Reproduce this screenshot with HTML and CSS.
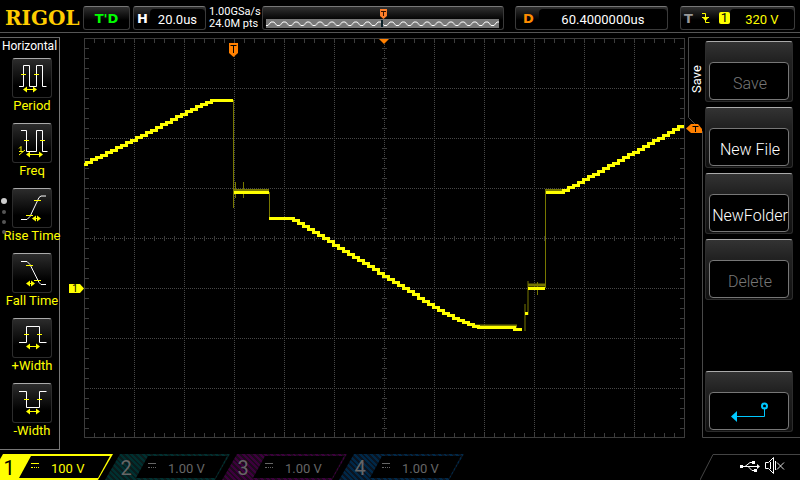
FILE: index.html
```html
<!DOCTYPE html>
<html lang="en">
<head>
  <meta charset="UTF-8">
  <meta name="viewport" content="width=device-width, initial-scale=1.0">
  <title>RIGOL</title>
  <link rel="stylesheet" href="styles.css">
</head>
<body>

  <!-- Status bar -->
  <header class="topbar">
    <div class="logo">RIGOL</div>
    <button class="box run-state">T'D</button>
    <button class="box timebase"><b>H</b><span class="value">20.0us</span></button>
    <div class="sampling"><div>1.00GSa/s</div><div>24.0M pts</div></div>
    <div class="box memory">
      <svg viewBox="0 0 242 23" preserveAspectRatio="none">
        <defs>
          <pattern id="sine" x="3" y="0" width="12" height="23" patternUnits="userSpaceOnUse">
            <path d="M0 18.500h2l3 -3.500h3l3 3.500h1" fill="none" stroke="#fff"/>
          </pattern>
        </defs>
        <rect x="3" y="12" width="235" height="9" fill="#777"/>
        <rect x="3" y="12" width="235" height="9" fill="url(#sine)"/>
        <path d="M119 13h2v7h-2z" fill="#0a2028"/>
        <path d="M118 2h7v7l-3.500 3l-3.500 -3z" fill="#ff7f2a"/>
        <path d="M119 4.500h5M121.500 4v5" stroke="#301000" fill="none"/>
      </svg>
    </div>
    <button class="box delay"><b>D</b><span class="value">60.4000000us</span></button>
    <button class="box trigger">
      <b>T</b>
      <svg class="edge" width="10" height="12" viewBox="0 0 10 12">
        <path d="M1 1.500h3.500v9h4M1 5.500h7" fill="none" stroke="#ff0"/>
        <path d="M1 5h7l-3.500 4z" fill="#ff0"/>
      </svg>
      <span class="source">1</span>
      <span class="value">320 V</span>
    </button>
  </header>

  <main class="main">
    <!-- Measure menu -->
    <nav class="measure-panel">
      <h2 class="measure-title">Horizontal</h2>
      <button class="measure">
        <svg class="icon" viewBox="0 0 38 38">
          <path class="wave" d="M6 27.500h4.500v-21h6v21h7v-21h6v21h4"/>
          <path class="mark" d="M8 15.500h5M21 15.500h5M13 30.500h9"/>
          <path class="arrow" d="M10 30.500l4 -3v6zM24 30.500l-4 -3v6z"/>
        </svg>
        <span>Period</span>
      </button>
      <button class="measure">
        <svg class="icon" viewBox="0 0 38 38">
          <path class="wave" d="M8 6.500h5.500v21h10v-21h6v21h5"/>
          <path class="mark" d="M11 16.500h5M27 16.500h5M15 30.500h14M6 24.500l2 -2v5M6 27.500h4M6 31l6 -5"/>
          <path class="arrow" d="M13 30.500l4 -3v6zM30 30.500l-4 -3v6z"/>
        </svg>
        <span>Freq</span>
      </button>
      <button class="measure">
        <svg class="icon" viewBox="0 0 38 38">
          <path class="wave" d="M8 30.500h6l3 -3l9 -19l2 -1.500h5"/>
          <path class="mark" d="M21 11.500h7M13 26.500h7M21 29.500h5"/>
          <path class="arrow" d="M19 29.500l4 -3v6zM28 29.500l-4 -3v6z"/>
        </svg>
        <span>Rise Time</span>
      </button>
      <button class="measure">
        <svg class="icon" viewBox="0 0 38 38">
          <path class="wave" d="M8 7.500h6l3 3l9 18l2 2h5"/>
          <path class="mark" d="M13 11.500h7M21 26.500h7M15 29.500h5"/>
          <path class="arrow" d="M13 29.500l4 -3v6zM22 29.500l-4 -3v6z"/>
        </svg>
        <span>Fall Time</span>
      </button>
      <button class="measure">
        <svg class="icon" viewBox="0 0 38 38">
          <path class="wave" d="M6 23.500h7.500v-16h13v16h7"/>
          <path class="mark" d="M11 15.500h5M24 15.500h5M15 27.500h10"/>
          <path class="arrow" d="M13 27.500l4 -3v6zM27 27.500l-4 -3v6z"/>
        </svg>
        <span>+Width</span>
      </button>
      <button class="measure">
        <svg class="icon" viewBox="0 0 38 38">
          <path class="wave" d="M6 7.500h7.500v16h13v-16h7"/>
          <path class="mark" d="M11 15.500h5M24 15.500h5M15 27.500h10"/>
          <path class="arrow" d="M13 27.500l4 -3v6zM27 27.500l-4 -3v6z"/>
        </svg>
        <span>-Width</span>
      </button>
      <div class="pager"><i class="active"></i><i></i><i></i><i></i></div>
    </nav>

    <!-- Waveform -->
    <svg class="plot" viewBox="60 33 628 421">
      <g class="grid">
        <path d="M134.500 38v400M184.500 38v400M234.500 38v400M284.500 38v400M334.500 38v400M384.500 38v400M434.500 38v400M484.500 38v400M534.500 38v400M584.500 38v400M634.500 38v400"/>
        <path d="M84 88.500h600M84 138.500h600M84 188.500h600M84 238.500h600M84 288.500h600M84 338.500h600M84 388.500h600"/>
      </g>
      <rect class="frame" x="84.500" y="38.500" width="600" height="399"/>
      <g class="ticks">
        <path d="M84 40.500h600M84 435.500h600M84 238.500h600"/>
        <path d="M86.500 38v400M682.500 38v400M384.500 38v400"/>
      </g>

      <path class="edge-line" d="M233.500 100v108M235.500 182v16M243.500 182v16M269.500 192v26M525 304v27M528 281v34M537.500 282v13M545.500 288v-99"/>
      <path class="glow" d="M234 190.500h35M475 326h42M528 285h17M546 190.500h16"/>
      <path class="trace" d="M84 164h2v-2h5v-3h5v-2h5v-2h5v-3h5v-2h5v-3h5v-2h5v-3h5v-2h5v-3h5v-2h5v-3h5v-2h5v-3h5v-3h5v-2h5v-3h5v-3h5v-2h5v-3h5v-2h5v-3h5v-2h5v-2h5v-2h22"/>
      <path class="trace" d="M234 192.500h35M269 218h24v2h5v3h5v3h5v3h5v3h5v3h5v3h5v3h5v4h5v3h5v3h5v3h5v3h5v3h5v3h5v3h5v3h5v4h5v3h5v3h5v3h5v3h5v3h5v3h5v3h5v4h5v3h5v3h5v3h5v3h5v3h5v2h5v3h5v2h5v2h5v2h5v2h5v1h36v2h8M525 313h3M528 288h17M546 192.500h17v-2h5v-3h5v-2h5v-3h5v-3h5v-3h5v-2h5v-3h5v-3h5v-3h5v-2h5v-3h5v-3h5v-3h5v-2h5v-3h5v-3h5v-3h5v-3h5v-2h5v-3h5v-3h5v-3h5v-3h6"/>

      <path class="orange" d="M229 43h9v10l-4.500 4l-4.500 -4z"/>
      <path class="marker-t" d="M230.500 45.500h6M233.500 45v8"/>
      <path class="orange" d="M379 39h10l-5 5z"/>
      <path class="yellow" d="M69 284h11l4 4.500l-4 4.500h-11z"/>
      <text class="marker-1" x="75" y="292">1</text>
      <path class="orange" d="M686 128.500l5 -4.500h7l4 5v4h-11z"/>
      <path class="marker-t" d="M692.500 126.500h6M695.500 126v6"/>
    </svg>

    <!-- Storage menu -->
    <aside class="menu">
      <svg class="menu-outline" viewBox="0 0 112 421" preserveAspectRatio="none">
        <path d="M112 4.500h-111.500v80l14 14v306h97.500"/>
      </svg>
      <h2 class="menu-title">Save</h2>
      <div class="menu-list">
        <button class="softkey" disabled><span>Save</span></button>
        <button class="softkey"><span>New File</span></button>
        <button class="softkey"><span>NewFolder</span></button>
        <button class="softkey" disabled><span>Delete</span></button>
        <button class="softkey back" aria-label="Back">
          <span>
            <svg width="40" height="22" viewBox="0 0 40 22">
              <path d="M5 14.500h29.500v-9" fill="none" stroke="#00c8ff"/>
              <circle cx="34.500" cy="4" r="2.500" fill="none" stroke="#00c8ff" stroke-width="2"/>
              <path d="M1 14.500l6 -5.500v11z" fill="#00c8ff"/>
            </svg>
          </span>
        </button>
      </div>
    </aside>
  </main>

  <!-- Channels -->
  <footer class="channels">
    <button class="channel ch1">
      <span class="number">1</span>
      <span class="scale"><i class="dc"></i><span>100 V</span></span>
    </button>
    <button class="channel ch2">
      <span class="number">2</span>
      <span class="scale"><i class="dc"></i><span>1.00 V</span></span>
    </button>
    <button class="channel ch3">
      <span class="number">3</span>
      <span class="scale"><i class="dc"></i><span>1.00 V</span></span>
    </button>
    <button class="channel ch4">
      <span class="number">4</span>
      <span class="scale"><i class="dc"></i><span>1.00 V</span></span>
    </button>
    <svg class="tray" width="100" height="26" viewBox="0 0 100 26">
      <path d="M0 26l13 -25.500h87" fill="none" stroke="#444"/>
      <!-- usb -->
      <g fill="none" stroke="#fff">
        <path d="M42 12.500h16M45 12.500l5 -4h3M48 12.500l4 4h4"/>
      </g>
      <path d="M40 11h3v3h-3zM57 10l3 2.500l-3 2.500zM52 7h3v3h-3zM54 15h3v3h-3z" fill="#fff"/>
      <!-- speaker off -->
      <path d="M65.500 8.500h3l5 -5v16l-5 -5h-3zM70.500 8v7M75.500 7v9" fill="none" stroke="#fff"/>
      <path d="M77 8.500l7 7M84 8.500l-7 7" fill="none" stroke="#ddd"/>
    </svg>
  </footer>

</body>
</html>
```

FILE: styles.css
```css
* {
  margin: 0;
  padding: 0;
  box-sizing: border-box;
}

body {
  min-height: 100vh;
  display: flex;
  flex-direction: column;
  background-color: #000;
  color: #fff;
  font-family: Roboto, "Liberation Sans", sans-serif;
  font-size: 13px;
  overflow: hidden;
}

button {
  font: inherit;
  color: inherit;
  background: none;
  border: none;
  cursor: pointer;
}

svg {
  display: block;
}

/* Status bar */
.topbar {
  display: flex;
  align-items: center;
  height: 33px;
  padding: 4px 5px 0 0;
  border-bottom: 1px solid #555;
}

.logo {
  width: 83px;
  padding-left: 5px;
  font-family: "DejaVu Serif", serif;
  font-size: 20px;
  font-weight: bold;
  color: #fc0;
}

.box {
  display: flex;
  align-items: center;
  height: 24px;
  border: 1px solid #3a3a3a;
  border-top: 1px solid #777;
  border-radius: 3px;
  background: linear-gradient(#303030, #000 60%);
}

.box b {
  font-family: "DejaVu Sans", sans-serif;
  font-size: 13px;
  font-weight: bold;
}

.box .value {
  flex: 1;
  height: 19px;
  line-height: 21px;
  border-radius: 4px;
  background-color: #000;
  text-align: center;
}

.run-state {
  width: 47px;
  justify-content: center;
  font-family: "DejaVu Sans", sans-serif;
  font-weight: bold;
  color: #0f0;
}

.timebase {
  width: 73px;
  margin: 0 3px;
  padding: 0 0 0 3px;
  gap: 2px;
}

.sampling {
  width: 53px;
  font-size: 11px;
  line-height: 12px;
  white-space: nowrap;
}

.memory {
  flex: 1;
}

.memory svg {
  width: 100%;
  height: 23px;
}

.delay {
  width: 153px;
  margin: 0 12px 0 11px;
  padding-left: 7px;
  gap: 5px;
}

.delay b {
  color: #ff8c00;
}

.trigger {
  width: 115px;
  padding-left: 3px;
  color: #ff0;
}

.trigger b {
  color: #999;
}

.edge {
  margin: 0 8px;
}

.source {
  width: 11px;
  height: 12px;
  line-height: 12px;
  border-radius: 2px;
  background-color: #ff0;
  color: #000;
}

/* Main area */
.main {
  flex: 1;
  display: flex;
}

.measure-panel {
  position: relative;
  width: 60px;
  margin: 4px 0;
  border-top: 1px solid #666;
  border-right: 1px solid #777;
  border-bottom: 1px solid #777;
  display: flex;
  flex-direction: column;
  align-items: center;
  gap: 10px;
}

.measure-title {
  height: 10px;
  line-height: 16px;
  font-size: 12px;
  font-weight: normal;
}

.measure {
  display: flex;
  flex-direction: column;
  align-items: center;
  width: 100%;
  color: #ff0;
  line-height: 15px;
  white-space: nowrap;
  padding-left: 5px;
}

.icon {
  width: 40px;
  height: 40px;
  border-radius: 3px;
  border: 1px solid #2c2c2c;
  border-top-color: #aaa;
  background: linear-gradient(#2c2c2c, #000 70%);
}

.wave {
  fill: none;
  stroke: #fff;
}

.mark {
  fill: none;
  stroke: #ff0;
}

.arrow {
  fill: #ff0;
}

.pager {
  position: absolute;
  left: 0;
  top: 160px;
  display: flex;
  flex-direction: column;
  align-items: center;
  width: 8px;
  gap: 6px;
}

.pager i {
  width: 4px;
  height: 4px;
  border-radius: 50%;
  background-color: #555;
}

.pager .active {
  width: 6px;
  height: 6px;
  background-color: #ccc;
}

.plot {
  position: relative;
  z-index: 1;
  flex: 1;
  min-width: 0;
  overflow: visible;
}

.grid path {
  stroke: #484848;
  stroke-dasharray: 1 1;
  shape-rendering: crispEdges;
}

.frame {
  fill: none;
  stroke: #3c3c3c;
}

.ticks path {
  fill: none;
  stroke: #3c3c3c;
  stroke-width: 5;
  stroke-dasharray: 1 9;
}

.trace {
  fill: none;
  stroke: #ff0;
  stroke-width: 3;
  shape-rendering: crispEdges;
}

.glow {
  stroke: #777700;
  stroke-width: 3;
}

.edge-line {
  stroke: #777700;
}

.orange {
  fill: #ff8000;
}

.yellow {
  fill: #ff0;
}

.marker-t {
  fill: none;
  stroke: #000;
}

.marker-1 {
  font-size: 10px;
  text-anchor: middle;
}

/* Storage menu */
.menu {
  position: relative;
  display: flex;
  width: 112px;
}

.menu-outline {
  position: absolute;
  width: 100%;
  height: 100%;
}

.menu-outline path {
  fill: none;
  stroke: #484848;
}

.menu-title {
  width: 17px;
  height: 92px;
  line-height: 17px;
  writing-mode: vertical-rl;
  transform: rotate(180deg);
  text-align: center;
  font-size: 13px;
  font-weight: normal;
}

.menu-list {
  position: relative;
  display: flex;
  flex-direction: column;
  gap: 5px;
  padding: 8px 0 22px;
}

.softkey {
  width: 88px;
  height: 61px;
  padding: 20px 3px 2px;
  border: 1px solid #2c2c2c;
  border-top-color: #aaa;
  border-radius: 3px;
  background: linear-gradient(#333, #222 30%, #111);
  font-size: 16px;
  font-weight: 300;
}

.softkey > span {
  display: flex;
  align-items: center;
  justify-content: center;
  height: 38px;
  padding: 4px 0 0 2px;
  border: 1px solid #777;
  border-radius: 4px;
  background-color: #000;
}

.softkey:disabled {
  color: #777;
}

.back {
  margin-top: auto;
}

/* Channels */
.channels {
  display: flex;
  height: 26px;
}

.channel {
  display: flex;
  width: 125px;
  margin-left: -8px;
  padding: 2px 3px 2px 0;
  clip-path: polygon(15px 0, 100% 0, calc(100% - 15px) 100%, 0 100%);
  color: #666;
}

.number {
  width: 31px;
  padding-left: 11px;
  line-height: 24px;
  font-size: 20px;
}

.scale {
  flex: 1;
  display: flex;
  align-items: center;
  gap: 12px;
  padding: 2px 0 0 12px;
  background-color: #000;
  clip-path: polygon(12px 0, 100% 0, calc(100% - 12px) 100%, 0 100%);
}

.dc {
  width: 8px;
  height: 5px;
  margin-bottom: 5px;
  border-top: 1px solid currentColor;
  border-bottom: 1px dotted currentColor;
}

.ch1 {
  margin-left: -12px;
  background-color: #ff0;
  color: #ff0;
}

.ch1 .number {
  color: #000;
}

.ch2 {
  background: repeating-linear-gradient(45deg, #003030 0 2px, #0a1c1c 2px 4px);
}

.ch3 {
  background: repeating-linear-gradient(45deg, #3c003c 0 2px, #1c0a1c 2px 4px);
}

.ch4 {
  background: repeating-linear-gradient(45deg, #002848 0 2px, #0a1420 2px 4px);
}

.tray {
  margin-left: auto;
}
```
